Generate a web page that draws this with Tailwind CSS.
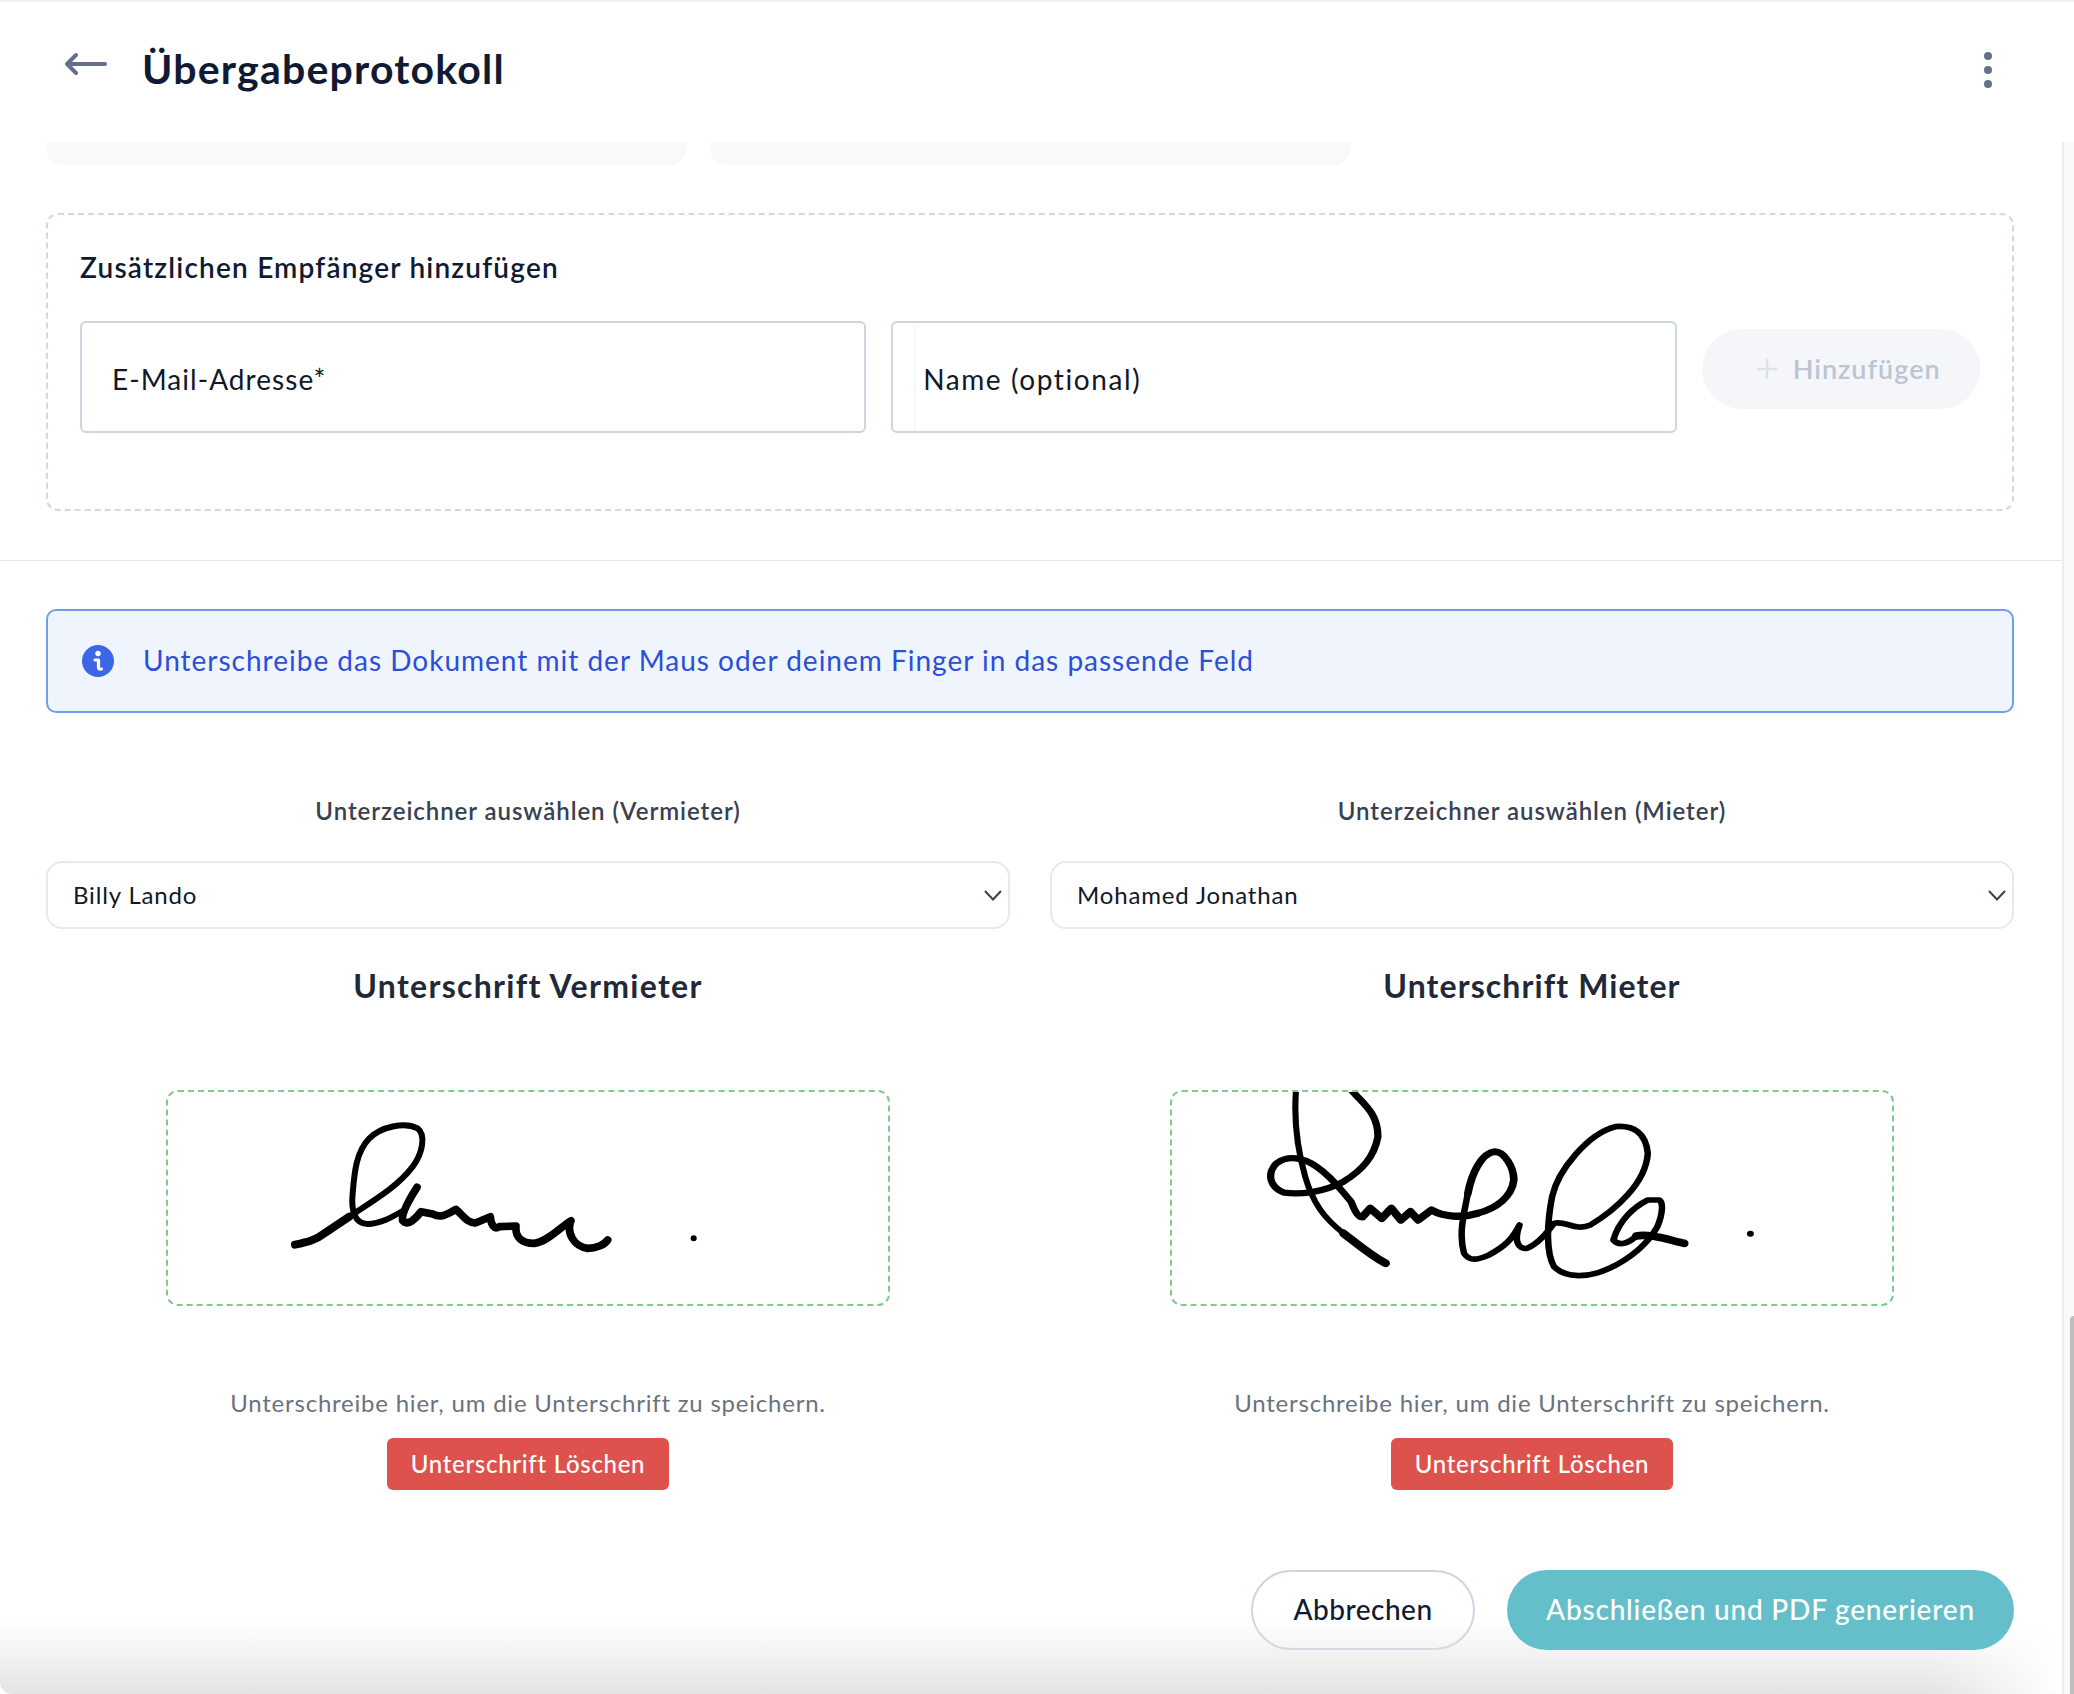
<!DOCTYPE html>
<html lang="de">
<head>
<meta charset="UTF-8">
<meta name="viewport" content="width=device-width, initial-scale=1.0">
<script src="https://cdn.jsdelivr.net/npm/@tailwindcss/browser@4"></script>
<title>Übergabeprotokoll</title>
</head>
<body class="bg-white font-['Lato',sans-serif] text-[#111827]">
<div class="h-[1694px] w-[2074px] overflow-hidden">
  <div class="h-[3px] bg-gradient-to-b from-[#ececec] to-white"></div>

  <!-- header -->
  <header class="flex h-[139px] items-center justify-between pr-[82px] pb-[8px] pl-[64px]">
    <div class="flex items-center gap-[34px]">
      <svg class="mb-[10px]" width="44" height="24" viewBox="0 0 44 24" fill="none" stroke="#64708a" stroke-width="4" stroke-linecap="round" stroke-linejoin="round"><path d="M41 12H3M12 3l-9 9 9 9"/></svg>
      <h1 class="text-[41px] font-bold tracking-[1.2px] text-[#111a33]">Übergabeprotokoll</h1>
    </div>
    <div class="mt-[3px] flex flex-col gap-[6px]">
      <span class="size-[8px] rounded-full bg-[#64708a]"></span>
      <span class="size-[8px] rounded-full bg-[#64708a]"></span>
      <span class="size-[8px] rounded-full bg-[#64708a]"></span>
    </div>
  </header>

  <div class="flex h-[1552px]">
    <main class="relative w-[2062px] overflow-hidden rounded-b-[12px]">
      <!-- cards cut off by the header -->
      <div class="flex gap-[24px] px-[46px]">
        <div class="h-[23px] w-[640px] rounded-b-[16px] bg-[#f8f9fb]"></div>
        <div class="h-[23px] w-[640px] rounded-b-[16px] bg-[#f8f9fb]"></div>
      </div>

      <!-- extra recipient -->
      <section class="mt-[48px] mr-[48px] ml-[46px] h-[298px] rounded-[12px] border-2 border-dashed border-[#d1d9e5] px-[32px] pt-[34px]">
        <h2 class="text-[28px] leading-[36px] font-semibold tracking-[1.2px] text-[#111a33]">Zusätzlichen Empfänger hinzufügen</h2>
        <div class="mt-[36px] flex items-start gap-[25px]">
          <div class="flex h-[112px] w-[787px] items-center rounded-[6px] border-2 border-[#cdd5e1] pt-[3px] pl-[30px] text-[28px] tracking-[1.05px]">E-Mail-Adresse*</div>
          <div class="relative flex h-[112px] w-[787px] items-center rounded-[6px] border-2 border-[#cdd5e1] pt-[3px] pl-[30px] text-[28px] tracking-[1.6px]">
            <span class="absolute inset-y-0 left-[21px] w-px bg-[#f3f4f6]"></span>
            Name (optional)
          </div>
          <div class="mt-[8px] flex h-[80px] w-[278px] items-center justify-center gap-[15px] rounded-full bg-[#f5f6f9] pl-[14px] text-[27px] font-semibold tracking-[1px] text-[#bcc5d3]">
            <svg width="22" height="22" viewBox="0 0 22 22" stroke="#dde1e9" stroke-width="2.500"><path d="M11 1v20M1 11h20"/></svg>
            Hinzufügen
          </div>
        </div>
      </section>

      <hr class="mt-[49px] border-t border-[#e5e7eb]">

      <!-- info -->
      <div class="mt-[48px] mr-[48px] ml-[46px] flex h-[104px] items-center gap-[29px] rounded-[10px] border-2 border-[#6e9fee] bg-[#eff4fd] pl-[34px] text-[28px] tracking-[1px] text-[#2a4fd8]">
        <svg width="32" height="32" viewBox="0 0 32 32" fill="none"><circle cx="16" cy="16" r="16" fill="#3b66e6"/><circle cx="16" cy="8.500" r="2.700" fill="#fff"/><path d="M13 15h3.500v7.500q0 2 3 1.500" stroke="#fff" stroke-width="3.200" stroke-linecap="round" stroke-linejoin="round"/></svg>
        <span class="pb-[2px]">Unterschreibe das Dokument mit der Maus oder deinem Finger in das passende Feld</span>
      </div>

      <!-- signatures -->
      <div class="mt-[76px] mr-[48px] ml-[46px] grid grid-cols-2 gap-[40px]">
        <div class="flex flex-col items-center">
          <label class="text-[24px] leading-[44px] font-semibold tracking-[0.95px] text-[#374151]">Unterzeichner auswählen (Vermieter)</label>
          <div class="mt-[28px] flex h-[68px] w-full items-center justify-between rounded-[16px] border-2 border-[#e5e9f0] pr-[6px] pl-[25px] text-[24px] tracking-[0.85px]">
            Billy Lando
            <svg width="18" height="11" viewBox="0 0 18 11" fill="none" stroke="#374151" stroke-width="2"><path d="M1 1l8 8.500L17 1"/></svg>
          </div>
          <h3 class="mt-[35px] text-[32px] leading-[44px] font-bold tracking-[1.3px] text-[#1f2937]">Unterschrift Vermieter</h3>
          <div class="mt-[82px] h-[216px] w-[724px] rounded-[12px] border-2 border-dashed border-[#7fcb8c]">
            <svg width="720" height="212" viewBox="-219 66 2160 636" fill="none" stroke="#000" stroke-linecap="round" stroke-linejoin="round">
              <path stroke-width="24" d="M162 524 C200 516 225 510 250 490 L325 440"/>
              <path stroke-width="18" d="M325 440 C400 390 470 350 515 290 C545 250 555 195 530 175 C490 155 420 170 385 205 C345 245 340 310 335 370 C330 420 340 462 380 462 C420 462 455 440 490 420"/>
              <path stroke-width="23" d="M528 352 C510 380 480 430 485 452 C500 470 525 445 540 425 L575 432 C600 445 615 435 645 418 C665 435 680 462 705 458 L748 440 C750 465 760 480 775 470 L825 468 C822 500 840 520 880 520 C920 515 960 470 990 452 C975 490 1000 530 1040 535 C1065 535 1090 525 1100 510"/>
              <path stroke-width="18" d="M1358 505 h.1"/>
            </svg>
          </div>
          <p class="mt-[81px] text-[24px] leading-[32px] tracking-[0.78px] text-[#6b7280]">Unterschreibe hier, um die Unterschrift zu speichern.</p>
          <button class="mt-[19px] h-[52px] w-[282px] rounded-[6px] bg-[#de524e] text-[24px] font-medium tracking-[0.7px] text-white">Unterschrift Löschen</button>
        </div>

        <div class="flex flex-col items-center">
          <label class="text-[24px] leading-[44px] font-semibold tracking-[0.95px] text-[#374151]">Unterzeichner auswählen (Mieter)</label>
          <div class="mt-[28px] flex h-[68px] w-full items-center justify-between rounded-[16px] border-2 border-[#e5e9f0] pr-[6px] pl-[25px] text-[24px] tracking-[0.85px]">
            Mohamed Jonathan
            <svg width="18" height="11" viewBox="0 0 18 11" fill="none" stroke="#374151" stroke-width="2"><path d="M1 1l8 8.500L17 1"/></svg>
          </div>
          <h3 class="mt-[35px] text-[32px] leading-[44px] font-bold tracking-[1.1px] text-[#1f2937]">Unterschrift Mieter</h3>
          <div class="mt-[82px] h-[216px] w-[724px] rounded-[12px] border-2 border-dashed border-[#7fcb8c]">
            <svg width="720" height="212" viewBox="-78 66 1881 636" preserveAspectRatio="none" fill="none" stroke="#000" stroke-linecap="round" stroke-linejoin="round">
              <path stroke-width="16" d="M246 60 C240 150 250 240 270 320 C290 400 320 445 370 490"/>
              <path stroke-width="23" d="M370 490 C410 525 440 555 480 580"/>
              <path stroke-width="19" d="M390 60 C425 105 460 130 460 200 C450 260 420 300 370 335 C320 365 260 375 215 368 C175 350 170 310 195 280 C225 255 265 262 300 290 C345 325 370 370 390 395 C400 425 410 445 420 440"/>
              <path stroke-width="22" d="M420 440 L440 415 L470 445 L495 415 L520 450 L545 425 L565 450 L600 420 C630 440 680 445 720 430"/>
              <path stroke-width="20" d="M720 430 C770 415 810 380 815 330 C815 290 790 245 765 245 C730 250 705 310 695 370"/>
              <path stroke-width="17" d="M695 370 C685 430 670 490 685 550 C700 575 720 570 750 555 C790 530 810 510 830 465 C815 510 825 540 850 535 C880 520 900 490 920 460 C950 450 975 485 1015 465 C1080 420 1160 340 1165 250 C1160 190 1130 165 1080 170 C1010 190 930 300 915 380 C900 470 900 550 920 590 C950 625 1010 625 1065 595 C1110 570 1160 530 1190 470 C1205 430 1205 395 1195 390 L1165 390 C1130 410 1090 450 1075 510 C1090 530 1115 520 1135 498"/>
              <path stroke-width="23" d="M1135 498 C1170 490 1220 510 1260 520"/>
              <path stroke-width="18" d="M1433 491 h.1"/>
            </svg>
          </div>
          <p class="mt-[81px] text-[24px] leading-[32px] tracking-[0.78px] text-[#6b7280]">Unterschreibe hier, um die Unterschrift zu speichern.</p>
          <button class="mt-[19px] h-[52px] w-[282px] rounded-[6px] bg-[#de524e] text-[24px] font-medium tracking-[0.7px] text-white">Unterschrift Löschen</button>
        </div>
      </div>

      <!-- footer buttons -->
      <div class="mt-[80px] mr-[48px] ml-[46px] flex justify-end gap-[32px]">
        <button class="h-[80px] w-[224px] rounded-full border-2 border-[#cdd5e1] pb-[2px] text-[28px] font-medium tracking-[0.5px] text-[#111a33]">Abbrechen</button>
        <button class="relative z-10 h-[80px] w-[507px] rounded-full bg-[#65bfca] pb-[2px] text-[28px] font-medium tracking-[0.8px] text-white">Abschließen und PDF generieren</button>
      </div>

      <!-- bottom shade, fades out towards the right corner -->
      <div class="pointer-events-none absolute inset-x-0 bottom-0 h-[74px] bg-gradient-to-b from-transparent to-[#e4e4e4]"></div>
      <div class="pointer-events-none absolute right-0 bottom-0 h-[74px] w-[130px] bg-gradient-to-r from-transparent to-white"></div>
    </main>

    <!-- scrollbar -->
    <aside class="relative flex-1 border-l-2 border-[#ececec] bg-[#f9f9f9]">
      <div class="absolute right-0 bottom-0 h-[378px] w-[4px] rounded-tl-[4px] bg-[#bdbdbd]"></div>
    </aside>
  </div>
</div>
</body>
</html>
